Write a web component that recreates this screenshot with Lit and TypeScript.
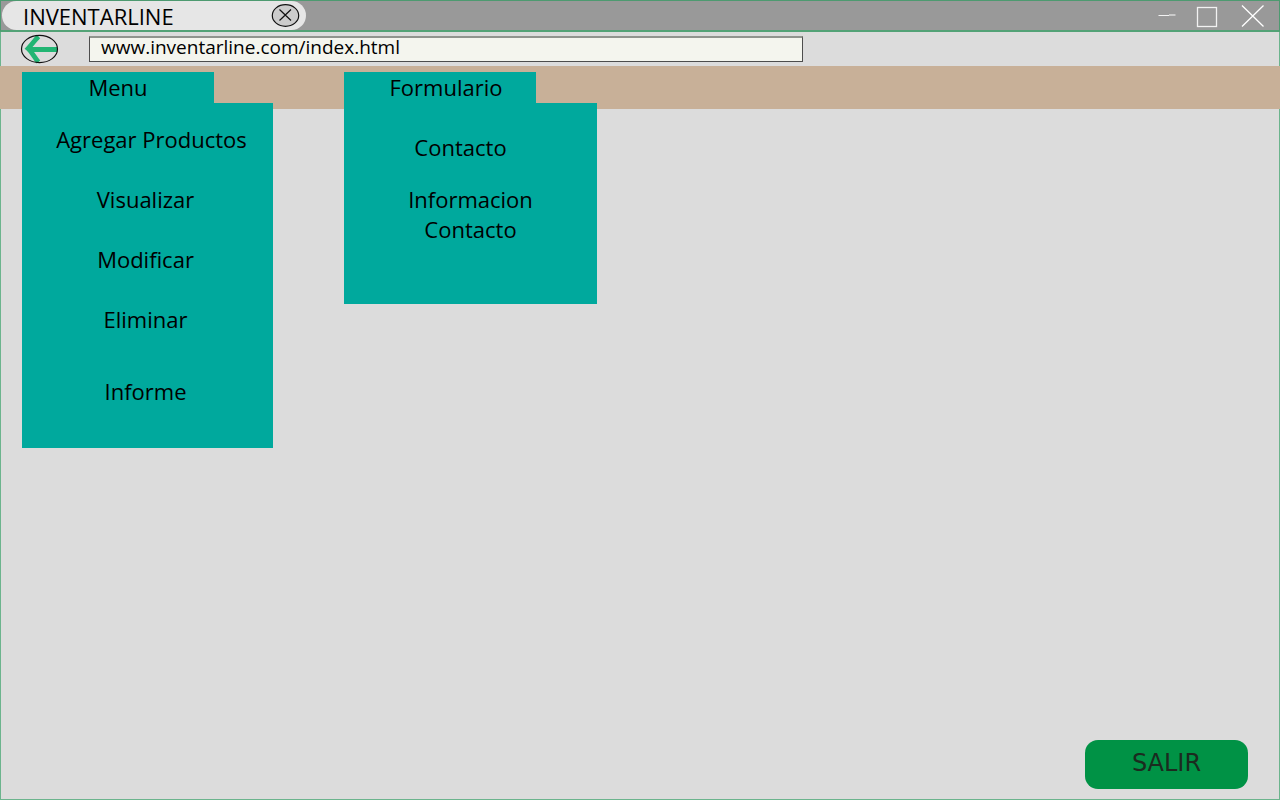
import { LitElement, html, css } from "lit";
import { customElement, property } from "lit/decorators.js";

interface MenuItem {
  label: string;
  kind?: string;
}

@customElement("drop-menu")
export class DropMenu extends LitElement {
  @property() label = "";
  @property({ attribute: false }) items: MenuItem[] = [];

  static styles = css`
    :host {
      display: block;
      position: relative;
      width: 192px;
    }
    .tab {
      display: block;
      width: 100%;
      height: 31px;
      padding: 0;
      border: 0;
      background: #00a99d;
      color: #000;
      font: inherit;
      line-height: 31px;
      text-align: center;
      cursor: pointer;
    }
    .panel {
      position: absolute;
      top: 100%;
      left: 0;
      z-index: 1;
      box-sizing: border-box;
      display: flex;
      flex-direction: column;
      gap: 30px;
      width: 251px;
      margin: 0;
      padding: 21px 20px 42px 16px;
      list-style: none;
      background: #00a99d;
    }
    :host([compact]) .panel {
      gap: 22px;
      width: 253px;
      padding: 29px 56px 60px;
    }
    :host([compact]) .tab {
      padding-left: 12px;
    }
    .item {
      text-align: center;
      line-height: 30px;
    }
    .report {
      padding-top: 12px;
    }
    .contact {
      padding-right: 20px;
    }
    .wide {
      padding-left: 12px;
    }
    .link {
      color: #000;
      text-decoration: none;
    }
  `;

  render() {
    return html`
      <button class="tab" type="button" aria-expanded="true">${this.label}</button>
      <ul class="panel">
        ${this.items.map(
          (item) => html`<li class="item ${item.kind ?? ""}"><a class="link" href="#">${item.label}</a></li>`
        )}
      </ul>
    `;
  }
}

@customElement("app-root")
export class AppRoot extends LitElement {
  private menu: MenuItem[] = [
    { label: "Agregar Productos", kind: "wide" },
    { label: "Visualizar" },
    { label: "Modificar" },
    { label: "Eliminar" },
    { label: "Informe", kind: "report" },
  ];
  private forms: MenuItem[] = [
    { label: "Contacto", kind: "contact" },
    { label: "Informacion Contacto" },
  ];

  static styles = css`
    :host {
      display: flex;
      flex-direction: column;
      min-height: 100vh;
      background: #dcdcdc;
      color: #000;
      font-family: "Open Sans", "Noto Sans", sans-serif;
      font-size: 22px;
    }
    button {
      padding: 0;
      border: 0;
      background: none;
      font: inherit;
      cursor: pointer;
    }
    svg {
      display: block;
    }
    .titlebar {
      box-sizing: border-box;
      display: flex;
      justify-content: space-between;
      align-items: center;
      height: 32px;
      padding: 0 13px 0 1px;
      border: 1px solid #4d9a70;
      border-bottom: 2px solid #53a276;
      background: #999;
    }
    .page-tab {
      box-sizing: border-box;
      display: flex;
      justify-content: space-between;
      align-items: center;
      width: 304px;
      height: 29px;
      padding: 0 6px 0 21px;
      border-radius: 15px;
      background: #e6e6e6;
      line-height: 30px;
    }
    .controls {
      display: flex;
      align-items: center;
      gap: 20px;
    }
    .toolbar {
      box-sizing: border-box;
      display: flex;
      align-items: center;
      gap: 30px;
      height: 34px;
      padding: 0 20px 1px 19px;
      border: solid #6cb48d;
      border-width: 0 1px;
    }
    .address {
      box-sizing: border-box;
      width: 714px;
      max-width: 80%;
      height: 26px;
      padding: 0 11px 4px;
      border: 1px solid #4d4d4d;
      border-top: 2px solid #90948e;
      border-radius: 0;
      background: #f4f5ee;
      color: #000;
      font: inherit;
      font-size: 19px;
      outline: 0;
    }
    .band {
      box-sizing: border-box;
      display: flex;
      align-items: flex-start;
      gap: 130px;
      height: 43px;
      padding: 6px 22px 0;
      background: #c8b098;
    }
    .content {
      box-sizing: border-box;
      flex: 1;
      display: flex;
      justify-content: flex-end;
      align-items: flex-end;
      padding: 0 31px 10px;
      border: 1px solid #6cb48d;
      border-top: 0;
    }
    .exit {
      width: 163px;
      height: 49px;
      padding-bottom: 4px;
      border-radius: 13px;
      background: #009245;
      color: #1b2b1f;
      font-family: "DejaVu Sans", sans-serif;
      font-size: 24px;
    }
  `;

  render() {
    return html`
      <header class="titlebar">
        <div class="page-tab">
          <span>INVENTARLINE</span>
          <button type="button" aria-label="Cerrar pestaña">
            <svg width="29" height="24" viewBox="0 0 29 24" fill="none" stroke="#111">
              <ellipse cx="14.5" cy="11.5" rx="13.2" ry="10.8" fill="#ccc" stroke-width="1.2" />
              <path d="M8.5 5.5 20 16.5M20 5.5 8.5 16.5" stroke-width="1.2" />
            </svg>
          </button>
        </div>
        <div class="controls">
          <button type="button" aria-label="Minimizar">
            <svg width="18" height="24" viewBox="0 0 18 24" stroke="#f2f2f2">
              <path d="M0.5 11.5H11" />
              <path d="M11 11H17.5" stroke="#d0d0d0" stroke-width="1.8" />
            </svg>
          </button>
          <button type="button" aria-label="Maximizar">
            <svg width="22" height="24" viewBox="0 0 22 24" fill="none" stroke="#f2f2f2" stroke-width="1.3">
              <rect x="1.5" y="3.5" width="19" height="19" />
            </svg>
          </button>
          <button type="button" aria-label="Cerrar">
            <svg width="28" height="24" viewBox="0 0 28 24" stroke="#fff" stroke-width="1.3">
              <path d="M4 1.5 25.5 22.5M25.5 1.5 4 22.5" />
            </svg>
          </button>
        </div>
      </header>
      <div class="toolbar">
        <button type="button" aria-label="Volver">
          <svg width="39" height="30" viewBox="0 0 39 30" fill="none">
            <path d="M18.5 2.5C15 6 13 9 8 14.5C12 18 14 23 18.5 28M8 15.5H37" stroke="#22b573" stroke-width="4.8" />
            <ellipse cx="19.5" cy="15" rx="18" ry="13.6" stroke="#111" stroke-width="1.2" />
          </svg>
        </button>
        <input class="address" type="text" aria-label="Dirección" value="www.inventarline.com/index.html" />
      </div>
      <nav class="band">
        <drop-menu label="Menu" .items=${this.menu}></drop-menu>
        <drop-menu compact label="Formulario" .items=${this.forms}></drop-menu>
      </nav>
      <main class="content">
        <button class="exit" type="button">SALIR</button>
      </main>
    `;
  }
}
